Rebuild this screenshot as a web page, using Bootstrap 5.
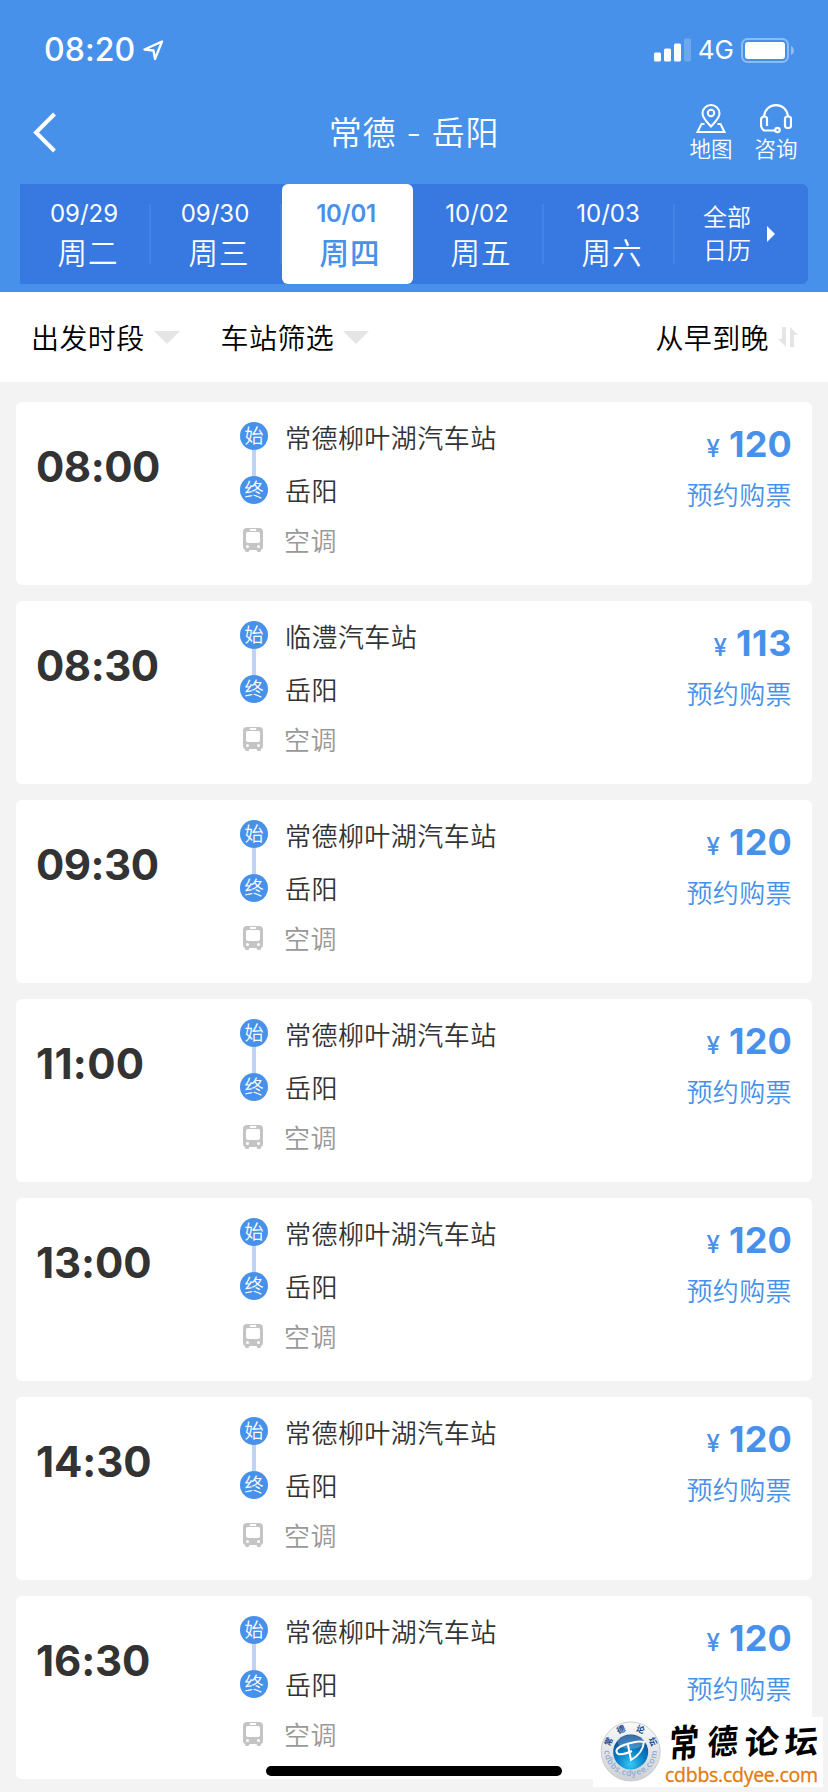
<!DOCTYPE html>
<html lang="zh-CN">
<head>
<meta charset="utf-8">
<meta name="viewport" content="width=device-width, initial-scale=1">
<title>常德 - 岳阳</title>
<link rel="stylesheet" href="https://cdn.jsdelivr.net/npm/bootstrap@5.3.0/dist/css/bootstrap.min.css">
<style>
:root{--sky:#4891eb;--deep:#3778e1}
html,body{height:1792px;overflow:hidden}
body{background:#f3f3f3;color:#333;font-family:Inter,"Noto Sans CJK SC",sans-serif;font-weight:350;position:relative;line-height:1}
svg{display:block;flex:none}
.top-area{background:var(--sky);height:292px;color:#fff}
.status{height:100px;padding:0 34px 0 44px}
.clock{font-size:32px;font-weight:500;letter-spacing:.1px;line-height:100px}
.net{font-size:26px;font-weight:400;line-height:100px}
.titlebar{height:84px;padding:0 30px 0 33px}
.heading{font-size:33px;letter-spacing:.7px;line-height:40px;margin:0;padding-top:13px;font-weight:350}
.tool{font-size:21.500px;line-height:30px;width:44px}
.dates{height:100px;margin:0 20px;background:var(--deep);border-radius:0 6px 6px 0}
.day{width:131px;height:100px;position:relative;font-size:24px}
.day+.day::before,.all-days::before{content:"";position:absolute;left:-2px;top:20px;width:2px;height:60px;background:#4482e5}
.day .md{line-height:30px;padding-top:15px;margin-left:-3px;font-weight:400}
.day .wk{font-size:29.500px;letter-spacing:1px;line-height:40px;margin-top:4px;padding-left:5px}
.day.active{background:#fff;color:var(--sky);border-radius:6px;z-index:1}
.day.active .md{font-weight:600;letter-spacing:-.3px}
.day.active .wk{font-weight:450}
.all-days{position:relative;font-size:24px;line-height:33.500px;padding-left:28px;width:133px}
.filters{height:90px;background:#fff;color:#000;font-size:28px;letter-spacing:.4px;padding:0 30px 0 31px}
.filters span{line-height:40px;padding-top:3px}
.trip-list{padding:20px 16px 0;gap:16px}
.trip{height:183px;border:0;border-radius:6px;background:#fff;position:relative;padding:20px 20px 0 20px}
.depart{width:204px;font-size:42px;font-weight:650;line-height:50px;padding-top:20px}
.stop-mark{width:28px;height:28px;border-radius:50%;background:var(--sky);color:#fff;font-size:19px;line-height:30px;text-align:center}
.rail{width:4px;height:26px;background:#c0d3f4}
.names{font-size:26px;letter-spacing:.45px;margin:1px 0 0 17px}
.names div{line-height:32px}
.names .ac{color:#999;margin-left:-1px}
.fare{color:var(--sky);font-size:26px}
.amount{font-size:36px;font-weight:650;line-height:44px}
.yen{font-size:24px;font-weight:450;margin-right:9px}
.book{line-height:34px;margin-top:8px;letter-spacing:.4px}
.home-bar{position:absolute;left:266px;top:1766px;width:296px;height:10px;border-radius:5px;background:#000}
.forum{position:absolute;left:593px;top:1717px;width:230px;height:70px;background:#fff}
</style>
</head>
<body>
<svg width="0" height="0" class="position-absolute">
<symbol id="bus" viewBox="0 0 20 24"><path fill="#c4c4c4" fill-rule="evenodd" d="M4 0h12q4 0 4 4v15q0 2.500-2 3v1q0 1-2 1h-1q-1 0-1.500-2h-7q-.5 2-1.500 2h-1q-2 0-2-1v-1q-2-.5-2-3V4q0-4 4-4zM7 1q-1 2 1 2h4q2 0 1-2zM4.500 4Q3 4 3 6v7q0 2 2 2h10q2 0 2-2V6q0-2-1.500-2zM4.500 17a1.500 1.500 0 100 3 1.500 1.500 0 000-3zm11 0a1.500 1.500 0 100 3 1.500 1.500 0 000-3z"/></symbol>
</svg>
<header class="top-area">
<div class="status d-flex align-items-center justify-content-between">
<div class="d-flex align-items-center"><span class="clock">08:20</span>
<svg class="ms-2" width="21" height="21" viewBox="0 0 21 21"><path d="M1.500 9.500 19 1.500 12 19 10.500 10.500z" fill="none" stroke="#fff" stroke-width="2.300" stroke-linejoin="round"/></svg></div>
<div class="d-flex align-items-center">
<svg width="37" height="24" viewBox="0 0 37 24" fill="#fff"><rect y="14.500" width="7" height="9" rx="1.500"/><rect x="10" y="10.500" width="7" height="13" rx="1.500"/><rect x="20" y="5.500" width="7" height="18" rx="1.500"/><rect x="30" y=".5" width="7" height="23" rx="1.500" opacity=".2"/></svg>
<span class="net" style="margin-left:7px">4G</span>
<svg style="margin-left:7px" width="53" height="25" viewBox="0 0 53 25"><rect x="1" y="1" width="46" height="23" rx="5.500" fill="none" stroke="#fff" stroke-width="2" opacity=".38"/><rect x="4" y="4" width="40" height="17" rx="3" fill="#fff"/><path d="M50 8q3 1.500 3 4.500T50 17z" fill="#fff" opacity=".4"/></svg>
</div>
</div>
<div class="titlebar d-flex justify-content-between position-relative">
<svg class="back" style="margin-top:12px" width="24" height="41" viewBox="0 0 24 41"><path d="M21.500 2 3 20.500 21.500 39" fill="none" stroke="#fff" stroke-width="4"/></svg>
<h1 class="heading position-absolute start-0 end-0 text-center">常德 - 岳阳</h1>
<div class="d-flex" style="gap:21px">
<div class="tool text-center"><svg class="mx-auto" style="margin-top:4px" width="30" height="30" viewBox="0 0 30 30" fill="none" stroke="#fff" stroke-width="2"><path d="M15 22.500C10 17 6.500 14 6.500 9.500a8.500 8.500 0 0117 0c0 4.500-3.500 7.500-8.500 13z"/><circle cx="15" cy="9" r="3.200"/><path d="M8.500 20H5.500l-4 8h27l-4-8h-3"/></svg>地图</div>
<div class="tool text-center"><svg class="mx-auto" style="margin-top:4px" width="32" height="30" viewBox="0 0 32 30" fill="none" stroke="#fff" stroke-width="2.200"><path d="M4 12C5 5 10 1.200 16 1.200s11 3.800 12 10.800"/><rect x="25" y="12.500" width="6" height="11.500" rx="2.500"/><path d="M7 22v-7q0-2.500-2.500-2.500Q1 12.500 1 16v5q0 3.500 3 5.500h11"/><circle cx="17.500" cy="26" r="2.200"/></svg>咨询</div>
</div>
</div>
<nav class="dates d-flex text-center">
<div class="day"><div class="md">09/29</div><div class="wk">周二</div></div>
<div class="day"><div class="md">09/30</div><div class="wk">周三</div></div>
<div class="day active"><div class="md">10/01</div><div class="wk">周四</div></div>
<div class="day"><div class="md">10/02</div><div class="wk">周五</div></div>
<div class="day"><div class="md">10/03</div><div class="wk">周六</div></div>
<div class="all-days d-flex align-items-center"><div>全部<br>日历</div><svg style="margin-left:16px" width="8" height="16" viewBox="0 0 8 16"><path d="M0 0 8 8 0 16z" fill="#fff"/></svg></div>
</nav>
</header>
<section class="filters d-flex align-items-center">
<span>出发时段</span><svg style="margin-left:9px" width="26" height="13" viewBox="0 0 26 13"><path d="M0 0h26L13 13z" fill="#e5e5e5"/></svg>
<span style="margin-left:41px">车站筛选</span><svg style="margin-left:9px" width="26" height="13" viewBox="0 0 26 13"><path d="M0 0h26L13 13z" fill="#e5e5e5"/></svg>
<span class="ms-auto">从早到晚</span><svg style="margin-left:9px" width="20" height="20" viewBox="0 0 20 20"><path d="M4 0h4v20L0 12h4zM12 0l8 8h-4v12h-4z" fill="#e5e5e5"/></svg>
</section>
<main class="trip-list d-flex flex-column" id="trips"></main>
<div class="home-bar"></div>
<aside class="forum">
<svg width="230" height="70" viewBox="0 0 230 70">
<defs><radialGradient id="ball" cx=".5" cy=".85" r=".8"><stop offset="0" stop-color="#35c8f5"/><stop offset=".5" stop-color="#0a80c8"/><stop offset="1" stop-color="#064b91"/></radialGradient>
<linearGradient id="ring" x2="0" y2="1"><stop offset="0" stop-color="#fafafa"/><stop offset="1" stop-color="#ccd0d5"/></linearGradient>
<path id="arcLow" d="M11.200 32.500A26.500 26.500 0 0 0 64.200 32.500"/></defs>
<circle cx="37.700" cy="34.500" r="29.500" fill="url(#ring)" stroke="#c9cdd0"/>
<circle cx="37.700" cy="35" r="17.500" fill="url(#ball)"/>
<ellipse cx="37.700" cy="25" rx="13" ry="7" fill="#fff" opacity=".22"/>
<path d="M25 37q-5-5 6-9 14-5 20-3-1 11-13 18l-3-15M25 37q6 1 14-3" fill="none" stroke="#fff" stroke-width="2"/>
<g font-family="Noto Sans CJK SC,sans-serif" font-weight="700" font-size="8.500" fill="#174a91" text-anchor="middle"><text transform="rotate(-66 37.700 34.500)" x="37.700" y="13.500">常</text><text transform="rotate(-24 37.700 34.500)" x="37.700" y="13.500">德</text><text transform="rotate(24 37.700 34.500)" x="37.700" y="13.500">论</text><text transform="rotate(66 37.700 34.500)" x="37.700" y="13.500">坛</text></g>
<text font-family="Open Sans,sans-serif" font-size="8.500" font-weight="600" fill="#8fa9d3"><textPath href="#arcLow" startOffset="1" textLength="80">cdbbs.cdyee.com</textPath></text>
<g font-family="Noto Sans CJK SC,sans-serif" font-weight="700" font-size="32" fill="#000"><text transform="translate(75.500 41) rotate(-4) skewX(-7) scale(.93 1.180)">常</text><text transform="translate(114 38) rotate(-4) skewX(-7) scale(.95 1.050)">德</text><text transform="translate(151 38) rotate(-4) skewX(-7) scale(1.080 1)">论</text><text transform="translate(191 38) rotate(-4) skewX(-7) scale(1.050 1)">坛</text></g>
<text x="72" y="65" font-family="Open Sans,sans-serif" font-size="19.500" font-weight="400" stroke="#e17b0b" stroke-width=".3" fill="#e17b0b" textLength="153">cdbbs.cdyee.com</text>
</svg>
</aside>
<script>
const trips=[["08:00","常德柳叶湖汽车站",120],["08:30","临澧汽车站",113],["09:30","常德柳叶湖汽车站",120],["11:00","常德柳叶湖汽车站",120],["13:00","常德柳叶湖汽车站",120],["14:30","常德柳叶湖汽车站",120],["16:30","常德柳叶湖汽车站",120]];
// The digit 1 is narrow in Inter, so times and fares get a little tracking for each one.
const track=(s,base)=>(base+(String(s).match(/1/g)||[]).length*.4).toFixed(1);
document.getElementById("trips").innerHTML=trips.map(([time,from,fare])=>`
<article class="trip d-flex align-items-start">
<div class="depart" style="letter-spacing:${track(time,-.5)}px">${time}</div>
<div class="d-flex flex-column align-items-center"><div class="stop-mark">始</div><div class="rail"></div><div class="stop-mark">终</div><svg style="margin:24px 2px 0 0" width="20" height="24"><use href="#bus"/></svg></div>
<div class="names"><div>${from}</div><div style="margin-top:21px">岳阳</div><div class="ac" style="margin-top:18px">空调</div></div>
<div class="fare ms-auto text-end"><div class="amount"><span class="yen">¥</span><span style="letter-spacing:${track(fare,-.2)}px">${fare}</span></div><div class="book">预约购票</div></div>
</article>`).join("");
</script>
<script src="https://cdn.jsdelivr.net/npm/bootstrap@5.3.0/dist/js/bootstrap.bundle.min.js"></script>
</body>
</html>
